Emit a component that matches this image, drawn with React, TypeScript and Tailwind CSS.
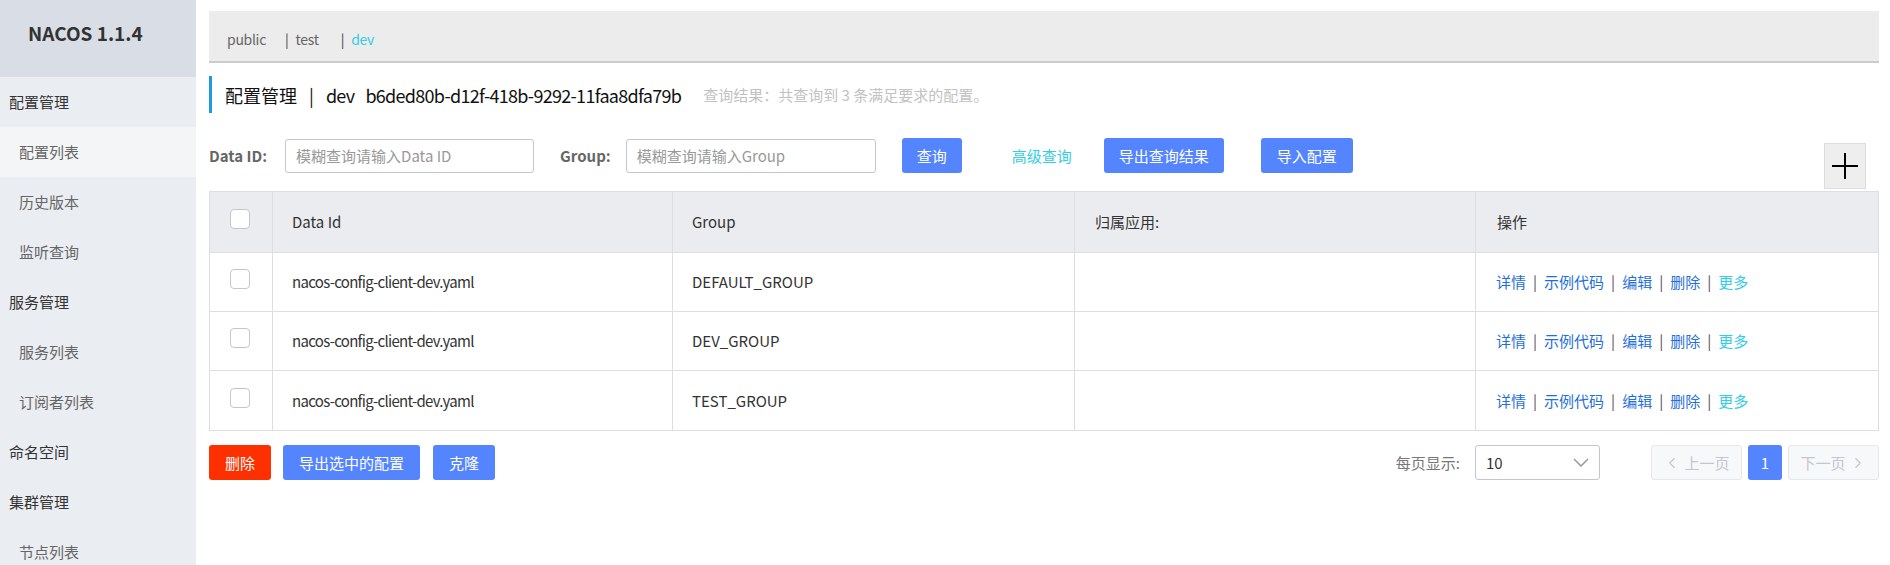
import { ChevronLeft, ChevronRight } from "lucide-react";

const rows = [
  { dataId: "nacos-config-client-dev.yaml", group: "DEFAULT_GROUP" },
  { dataId: "nacos-config-client-dev.yaml", group: "DEV_GROUP" },
  { dataId: "nacos-config-client-dev.yaml", group: "TEST_GROUP" },
];

const menu = [
  { label: "配置管理", section: true },
  { label: "配置列表", active: true },
  { label: "历史版本" },
  { label: "监听查询" },
  { label: "服务管理", section: true },
  { label: "服务列表" },
  { label: "订阅者列表" },
  { label: "命名空间", section: true },
  { label: "集群管理", section: true },
  { label: "节点列表" },
];

function Checkbox() {
  return <span className="block w-[20px] h-[20px] mb-[6px] rounded-[4px] border border-[#c4c6cf] bg-white" />;
}

function Sidebar() {
  return (
    <aside className="w-[196px] shrink-0 bg-[#eaedf1] flex flex-col">
      <div className="h-[77px] shrink-0 bg-[#d9dee6] pl-[28px] pt-[21px]">
        <span className="text-[19px] leading-[24px] font-bold text-[#333]">NACOS 1.1.4</span>
      </div>
      {menu.map((m) => (
        <div
          key={m.label}
          className={`h-[50px] shrink-0 flex items-center text-[15px] leading-[20px] ${
            m.section ? "pl-[9px] text-[#333]" : "pl-[19px] text-[#666]"
          } ${m.active ? "bg-[#f4f5f7]" : ""}`}
        >
          {m.label}
        </div>
      ))}
    </aside>
  );
}

function Actions() {
  const links = ["详情", "示例代码", "编辑", "删除"];
  return (
    <div className="flex items-center text-[15px] leading-[20px]">
      {links.map((l) => (
        <span key={l} className="flex items-center">
          <span className="text-[#1f6fdc]">{l}</span>
          <span className="mx-[7px] text-[#555]">|</span>
        </span>
      ))}
      <span className="text-[#33cde5]">更多</span>
    </div>
  );
}

export default function App() {
  return (
    <div className="flex w-full h-[565px] overflow-hidden bg-white font-['Noto_Sans_CJK_SC','Liberation_Sans',sans-serif]">
      <Sidebar />

      <main className="flex-1 min-w-0 pl-[13px] pr-[11px] pt-[11px]">
        {/* namespace bar */}
        <div className="h-[52px] bg-[#ececec] border-b-2 border-[#cccccc] flex items-center pt-[6px] pl-[18px] text-[14px] leading-[20px] tracking-[-0.3px] text-[#666]">
          <span className="mr-[19px]">public</span>
          <span className="mr-[7px] text-[#444]">|</span>
          <span className="mr-[22px]">test</span>
          <span className="mr-[7px] text-[#444]">|</span>
          <span className="text-[#33cde5]">dev</span>
        </div>

        {/* title */}
        <div className="mt-[13px] h-[37px] border-l-[3px] border-[#209bd7] pl-[13px] flex items-center">
          <span className="text-[18px] leading-[24px] text-[#111]">配置管理</span>
          <span className="mx-[12px] text-[18px] leading-[24px] text-[#111]">|</span>
          <span className="text-[18px] leading-[24px] tracking-[-0.7px] text-[#111]">dev</span>
          <span className="ml-[11px] text-[18px] leading-[24px] tracking-[-0.7px] text-[#111]">b6ded80b-d12f-418b-9292-11faa8dfa79b</span>
          <span className="ml-[22px] text-[15px] leading-[20px] text-[#c2c2c2]">查询结果：共查询到 3 条满足要求的配置。</span>
        </div>

        {/* search row */}
        <div className="mt-[25px] flex items-start justify-between">
          <div className="flex items-center h-[35px]">
            <span className="text-[15px] leading-[20px] font-bold text-[#666]">Data ID:</span>
            <div className="ml-[18px] w-[249px] h-[34px] border border-[#c4c6cf] rounded-[3px] flex items-center pl-[10px] text-[15px] leading-[20px] text-[#999]">
              模糊查询请输入Data ID
            </div>
            <span className="ml-[26px] text-[15px] leading-[20px] font-bold text-[#666]">Group:</span>
            <div className="ml-[15px] w-[250px] h-[34px] border border-[#c4c6cf] rounded-[3px] flex items-center pl-[10px] text-[15px] leading-[20px] text-[#999]">
              模糊查询请输入Group
            </div>
            <button className="ml-[26px] h-[35px] px-[15px] rounded-[3px] bg-[#5584ff] text-white text-[15px] leading-[20px]">查询</button>
            <span className="ml-[50px] text-[15px] leading-[20px] text-[#33cde5]">高级查询</span>
            <button className="ml-[32px] h-[35px] px-[15px] rounded-[3px] bg-[#5584ff] text-white text-[15px] leading-[20px]">导出查询结果</button>
            <button className="ml-[37px] h-[35px] px-[16px] rounded-[3px] bg-[#5584ff] text-white text-[15px] leading-[20px]">导入配置</button>
          </div>
          <div className="mt-[5px] mr-[13px] w-[42px] h-[46px] bg-[#eeeeee] border border-[#dddddd] flex items-center justify-center">
            <svg width="26" height="26" viewBox="0 0 26 26">
              <path d="M13 0V26M0 13H26" stroke="#000" strokeWidth="2" />
            </svg>
          </div>
        </div>

        {/* table */}
        <div className="mt-[2px] border border-[#dcdee3] text-[15px] leading-[20px]">
          <div className="h-[61px] flex bg-[#ebecf0] border-b border-[#dcdee3] text-[#333]">
            <div className="w-[63px] shrink-0 border-r border-[#dcdee3] flex items-center pl-[20px]">
              <Checkbox />
            </div>
            <div className="w-[400px] shrink-0 border-r border-[#dcdee3] flex items-center pl-[19px]">Data Id</div>
            <div className="w-[402px] shrink-0 border-r border-[#dcdee3] flex items-center pl-[19px]">Group</div>
            <div className="w-[401px] shrink-0 border-r border-[#dcdee3] flex items-center pl-[20px]">归属应用:</div>
            <div className="flex-1 flex items-center pl-[21px]">操作</div>
          </div>
          {rows.map((r, i) => (
            <div
              key={r.group}
              className={`h-[59px] flex text-[#333] ${i < rows.length - 1 ? "border-b border-[#dcdee3]" : ""}`}
            >
              <div className="w-[63px] shrink-0 border-r border-[#dcdee3] flex items-center pl-[20px]">
                <Checkbox />
              </div>
              <div className="w-[400px] shrink-0 border-r border-[#dcdee3] flex items-center pl-[19px] tracking-[-0.7px]">{r.dataId}</div>
              <div className="w-[402px] shrink-0 border-r border-[#dcdee3] flex items-center pl-[19px]">{r.group}</div>
              <div className="w-[401px] shrink-0 border-r border-[#dcdee3]" />
              <div className="flex-1 flex items-center pl-[20px]">
                <Actions />
              </div>
            </div>
          ))}
        </div>

        {/* footer */}
        <div className="mt-[14px] flex items-center justify-between">
          <div className="flex items-center">
            <button className="h-[35px] px-[16px] rounded-[3px] bg-[#ff3000] text-white text-[15px] leading-[20px]">删除</button>
            <button className="ml-[12px] h-[35px] px-[16px] rounded-[3px] bg-[#5584ff] text-white text-[15px] leading-[20px]">导出选中的配置</button>
            <button className="ml-[13px] h-[35px] px-[16px] rounded-[3px] bg-[#5584ff] text-white text-[15px] leading-[20px]">克隆</button>
          </div>
          <div className="flex items-center text-[15px] leading-[20px]">
            <span className="text-[#777]">每页显示:</span>
            <div className="ml-[15px] w-[125px] h-[35px] border border-[#c4c6cf] rounded-[3px] flex items-center justify-between pl-[10px] pr-[10px] text-[#333]">
              <span>10</span>
              <svg width="16" height="9" viewBox="0 0 16 9">
                <path d="M1 1L8 8L15 1" fill="none" stroke="#999" strokeWidth="1.5" />
              </svg>
            </div>
            <div className="ml-[51px] w-[91px] h-[35px] rounded-[3px] border border-[#e6e7eb] bg-[#f7f8fa] flex items-center justify-center text-[#c4c6cf]">
              <ChevronLeft size={18} strokeWidth={1.5} className="mr-[3px]" />
              <span>上一页</span>
            </div>
            <div className="ml-[6px] w-[34px] h-[35px] rounded-[3px] bg-[#5584ff] flex items-center justify-center text-white">1</div>
            <div className="ml-[6px] w-[91px] h-[35px] rounded-[3px] border border-[#e6e7eb] bg-[#f7f8fa] flex items-center justify-center text-[#c4c6cf]">
              <span>下一页</span>
              <ChevronRight size={18} strokeWidth={1.5} className="ml-[3px]" />
            </div>
          </div>
        </div>
      </main>
    </div>
  );
}
